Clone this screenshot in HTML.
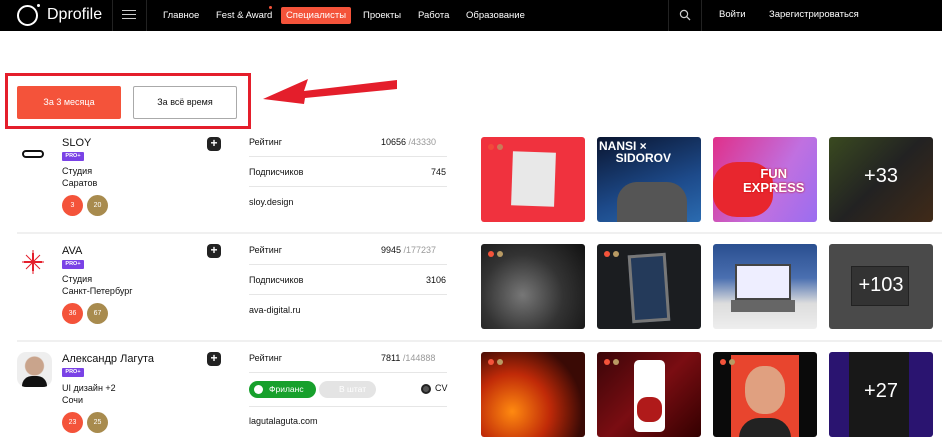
<!DOCTYPE html>
<html><head><meta charset="utf-8"><style>
*{margin:0;padding:0;box-sizing:border-box}
body{width:942px;height:442px;overflow:hidden;background:#fff;font-family:"Liberation Sans",sans-serif;color:#111;position:relative}
.a{position:absolute}
.nav{left:0;top:0;width:942px;height:31px;background:#000}
.vl{width:1px;height:31px;background:#222;top:0}
.badge{width:21px;height:21px;border-radius:50%;color:#fff;font-size:7px;text-align:center;line-height:21px}
.o{background:#f4533a}.g{background:#a88b4e}
.pro{background:#7a42e6;color:#fff;font-size:5.5px;font-weight:bold;width:22px;height:9px;line-height:9px;text-align:center;border-radius:1px}
.plus{width:14px;height:14px;border-radius:4px;background:#222;color:#fff;font-size:12px;line-height:13px;text-align:center;font-weight:bold}
.hl{height:1px;background:#e6e6e6;width:198px;left:249px}
.th{width:104px;height:85px;border-radius:3px;overflow:hidden}
.dots{position:absolute;left:7px;top:7px;width:6px;height:6px;border-radius:50%;background:#f4533a;box-shadow:9px 0 0 #b89a63}
.cnt{position:absolute;left:0;right:0;top:28px;text-align:center;color:#fff;font-size:20px}
.s{font-size:9px}
</style></head><body>
<div class="a nav"></div>
<div class="a" style="left:17px;top:5px;width:21px;height:21px;border:2px solid #fff;border-radius:50%"></div>
<div class="a" style="left:37px;top:4px;width:3px;height:3px;border-radius:50%;background:#fff"></div>
<div class="a" style="left:47px;top:6px;color:#fff;font-size:16px">Dprofile</div>
<div class="a vl" style="left:112px"></div>
<div class="a" style="left:122px;top:10px;width:14px;height:1px;background:#ccc;box-shadow:0 4px 0 #ccc,0 8px 0 #ccc"></div>
<div class="a vl" style="left:146px"></div>
<span class="a" style="left:163px;top:10px;color:#fff;font-size:9.5px">Главное</span>
<span class="a" style="left:216px;top:10px;color:#fff;font-size:9.5px">Fest &amp; Award</span>
<div class="a" style="left:269px;top:6px;width:3px;height:3px;border-radius:50%;background:#f4533a"></div>
<div class="a" style="left:281px;top:7px;width:70px;height:17px;background:#f4533a;border-radius:2px;color:#fff;font-size:9.5px;line-height:17px;text-align:center">Специалисты</div>
<span class="a" style="left:363px;top:10px;color:#fff;font-size:9.5px">Проекты</span>
<span class="a" style="left:418px;top:10px;color:#fff;font-size:9.5px">Работа</span>
<span class="a" style="left:466px;top:10px;color:#fff;font-size:9.5px">Образование</span>
<div class="a vl" style="left:668px"></div>
<svg class="a" style="left:679px;top:9px" width="12" height="12"><circle cx="5" cy="5" r="3.6" fill="none" stroke="#ccc" stroke-width="1.2"/><path d="M7.6 7.6L11 11" stroke="#ccc" stroke-width="1.3"/></svg>
<div class="a vl" style="left:701px"></div>
<span class="a" style="left:719px;top:9px;color:#fff;font-size:9.5px">Войти</span>
<span class="a" style="left:769px;top:9px;color:#fff;font-size:9.5px">Зарегистрироваться</span>

<div class="a" style="left:5px;top:73px;width:246px;height:56px;border:3px solid #e41e2b"></div>
<div class="a" style="left:17px;top:86px;width:104px;height:33px;background:#f4533a;border-radius:2px;color:#fff;font-size:9px;line-height:33px;text-align:center">За 3 месяца</div>
<div class="a" style="left:133px;top:86px;width:104px;height:33px;border:1px solid #aaa;border-radius:2px;font-size:9px;line-height:31px;text-align:center">За всё время</div>
<svg class="a" style="left:260px;top:76px" width="140" height="30"><polygon points="3,23 48,3 44,15 137,4 137,13 45,22 44,28" fill="#e41e2b"/></svg>

<div class="a" style="left:22px;top:150px;width:22px;height:8px;border:2.5px solid #111;border-radius:4px"></div>
<div class="a" style="left:62px;top:137px;font-size:11px">SLOY</div>
<div class="a pro" style="left:62px;top:152px">PRO+</div>
<div class="a" style="left:62px;top:166px;line-height:11.5px;font-size:9px">Студия<br>Саратов</div>
<div class="a badge o" style="left:62px;top:195px">3</div>
<div class="a badge g" style="left:87px;top:195px">20</div>
<div class="a plus" style="left:207px;top:137px">+</div>
<span class="a s" style="left:249px;top:137px">Рейтинг</span>
<span class="a s" style="left:381px;top:137px">10656 <span style="color:#999">/43330</span></span>
<div class="a hl" style="top:156px"></div>
<span class="a s" style="left:249px;top:167px">Подписчиков</span>
<span class="a s" style="left:431px;top:167px">745</span>
<div class="a hl" style="top:186px"></div>
<span class="a s" style="left:249px;top:197px">sloy.design</span>

<div class="a th" style="left:481px;top:137px;background:#f0323e"><div style="position:absolute;left:31px;top:15px;width:43px;height:54px;background:#e8e8e8;transform:rotate(2deg)"></div><div class="dots" style="opacity:.7"></div></div>
<div class="a th" style="left:597px;top:137px;background:linear-gradient(160deg,#0a1530,#1d4a8a 60%,#2b6bb0)"><div style="position:absolute;left:2px;top:3px;color:#fff;font-weight:bold;font-size:12px;line-height:12px">NANSI ×<br>&nbsp;&nbsp;&nbsp;&nbsp;&nbsp;SIDOROV</div><div style="position:absolute;left:20px;top:45px;width:70px;height:40px;background:#555;border-radius:20px 20px 0 0"></div></div>
<div class="a th" style="left:713px;top:137px;background:linear-gradient(120deg,#e0308a,#c070e0 60%,#9a6df0)"><div style="position:absolute;left:0;top:25px;width:60px;height:55px;background:#e8262e;border-radius:40%"></div><div style="position:absolute;left:30px;top:30px;color:#fff;font-weight:bold;font-size:13px;line-height:14px;text-align:center;text-shadow:0 0 2px #c00">FUN<br>EXPRESS</div></div>
<div class="a th" style="left:829px;top:137px;background:linear-gradient(135deg,#3a4a20,#222 50%,#402a18)"><div class="cnt">+33</div></div>

<div class="a" style="left:17px;top:232px;width:925px;height:2px;background:#f0f0f0"></div>
<svg class="a" style="left:22px;top:250px" width="22" height="24"><path d="M11 0V24M0 12H22M4 5L18 19M18 5L4 19" stroke="#e41e2b" stroke-width="1"/><path d="M11 3V21M2 12H20" stroke="#e41e2b" stroke-width="2"/></svg>
<div class="a" style="left:62px;top:245px;font-size:11px">AVA</div>
<div class="a pro" style="left:62px;top:260px">PRO+</div>
<div class="a" style="left:62px;top:274px;line-height:11.5px;font-size:9px">Студия<br>Санкт-Петербург</div>
<div class="a badge o" style="left:62px;top:303px">36</div>
<div class="a badge g" style="left:87px;top:303px">67</div>
<div class="a plus" style="left:207px;top:244px">+</div>
<span class="a s" style="left:249px;top:245px">Рейтинг</span>
<span class="a s" style="left:381px;top:245px">9945 <span style="color:#999">/177237</span></span>
<div class="a hl" style="top:264px"></div>
<span class="a s" style="left:249px;top:275px">Подписчиков</span>
<span class="a s" style="left:426px;top:275px">3106</span>
<div class="a hl" style="top:294px"></div>
<span class="a s" style="left:249px;top:305px">ava-digital.ru</span>

<div class="a th" style="left:481px;top:244px;background:radial-gradient(circle at 40% 60%,#777,#333 50%,#111)"><div class="dots"></div></div>
<div class="a th" style="left:597px;top:244px;background:#1b1d20"><div style="position:absolute;left:33px;top:10px;width:38px;height:68px;background:#243a5a;border:3px solid #777;transform:rotate(-4deg)"></div><div class="dots"></div></div>
<div class="a th" style="left:713px;top:244px;background:linear-gradient(#2a4f90,#4a6fb0 40%,#ddd 70%,#eee)"><div style="position:absolute;left:22px;top:20px;width:56px;height:36px;background:#eef;border:2px solid #444"></div><div style="position:absolute;left:18px;top:56px;width:64px;height:12px;background:#666"></div></div>
<div class="a th" style="left:829px;top:244px;background:#4a4a4a"><div style="position:absolute;left:22px;top:22px;width:58px;height:40px;background:#333;border:1px solid #222"></div><div class="cnt" style="top:30px">+103</div></div>

<div class="a" style="left:17px;top:340px;width:925px;height:2px;background:#f0f0f0"></div>
<div class="a" style="left:17px;top:352px;width:35px;height:35px;border-radius:9px;background:radial-gradient(circle at 50% 40%,#c9a48c 0 9px,#eee 10px);overflow:hidden"><div style="position:absolute;left:5px;top:24px;width:25px;height:14px;background:#111;border-radius:10px 10px 0 0"></div></div>
<div class="a" style="left:62px;top:353px;font-size:11px">Александр Лагута</div>
<div class="a pro" style="left:62px;top:368px">PRO+</div>
<div class="a" style="left:62px;top:383px;line-height:11.5px;font-size:9px">UI дизайн +2<br>Сочи</div>
<div class="a badge o" style="left:62px;top:412px">23</div>
<div class="a badge g" style="left:87px;top:412px">25</div>
<div class="a plus" style="left:207px;top:352px">+</div>
<span class="a s" style="left:249px;top:353px">Рейтинг</span>
<span class="a s" style="left:381px;top:353px">7811 <span style="color:#999">/144888</span></span>
<div class="a hl" style="top:372px"></div>
<div class="a" style="left:249px;top:381px;width:67px;height:17px;background:#17a02c;border-radius:9px;color:#fff;font-size:8.5px;line-height:17px;padding-left:20px">Фриланс</div>
<div class="a" style="left:254px;top:385px;width:9px;height:9px;border-radius:50%;background:#fff"></div>
<div class="a" style="left:319px;top:381px;width:57px;height:17px;background:#e4e4e4;border-radius:9px;color:#fff;font-size:8.5px;line-height:17px;padding-left:20px">В штат</div>
<div class="a" style="left:421px;top:384px;width:10px;height:10px;border-radius:50%;border:2px solid #222;background:#555"></div>
<span class="a s" style="left:435px;top:383px">CV</span>
<div class="a hl" style="top:406px"></div>
<span class="a s" style="left:249px;top:416px">lagutalaguta.com</span>

<div class="a th" style="left:481px;top:352px;background:radial-gradient(circle at 30% 70%,#ff8a10,#c02a08 40%,#3a0a05 75%)"><div class="dots"></div></div>
<div class="a th" style="left:597px;top:352px;background:linear-gradient(135deg,#3a0508,#7a0d12 50%,#300)"><div style="position:absolute;left:37px;top:8px;width:31px;height:72px;background:#fff;border-radius:5px"></div><div style="position:absolute;left:40px;top:45px;width:25px;height:25px;background:#b01a1a;border-radius:40%"></div><div class="dots"></div></div>
<div class="a th" style="left:713px;top:352px;background:#0a0a0a"><div style="position:absolute;left:18px;top:3px;width:68px;height:82px;background:#e8452e"></div><div style="position:absolute;left:32px;top:14px;width:40px;height:48px;background:#e0a080;border-radius:45%"></div><div style="position:absolute;left:26px;top:66px;width:52px;height:20px;background:#222;border-radius:20px 20px 0 0"></div><div class="dots"></div></div>
<div class="a th" style="left:829px;top:352px;background:#2a1470"><div style="position:absolute;left:20px;top:0;width:60px;height:85px;background:#181818"></div><div class="cnt">+27</div></div>
</body></html>
